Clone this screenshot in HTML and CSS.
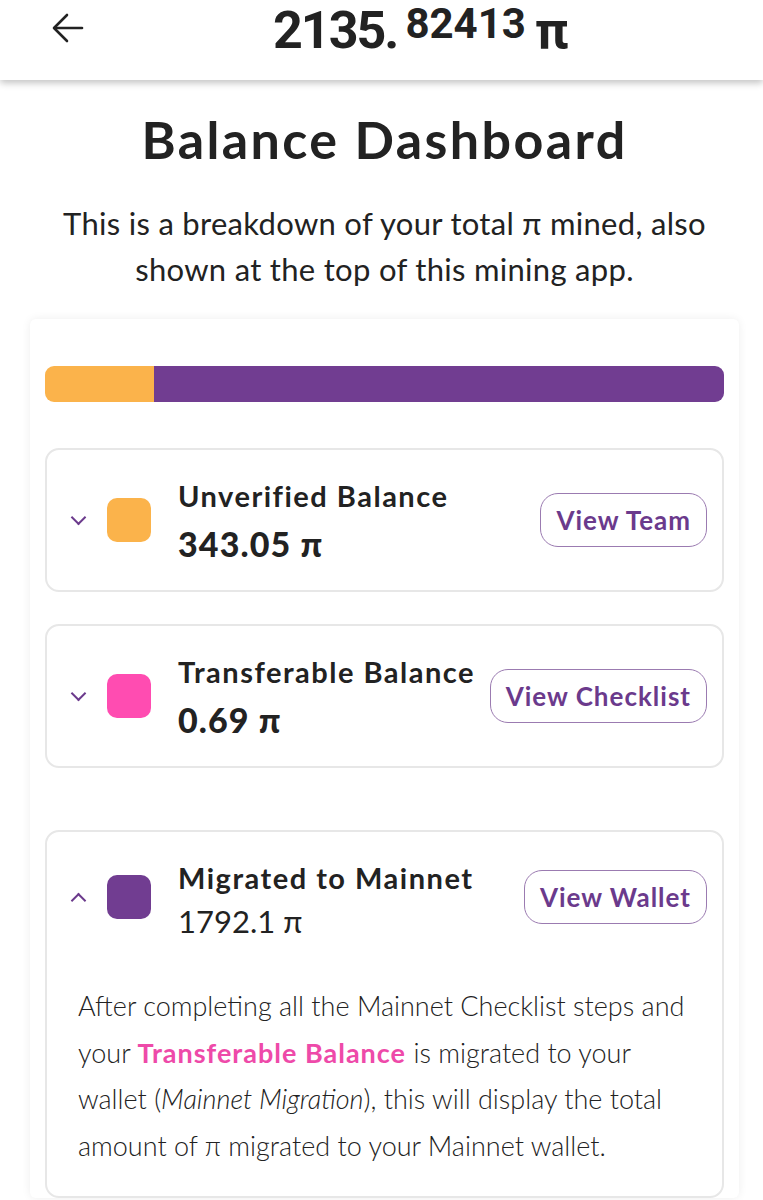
FILE: index.html
```html
<!DOCTYPE html>
<html lang="en">
<head>
  <meta charset="UTF-8">
  <meta name="viewport" content="width=device-width, initial-scale=1.0">
  <title>Balance Dashboard</title>
  <link rel="stylesheet" href="styles.css">
</head>
<body>
  <header class="topbar">
    <a class="back" href="#">
      <svg width="32" height="32" viewBox="0 0 32 32" fill="none" stroke="#222" stroke-width="2.6" stroke-linecap="round" stroke-linejoin="round">
        <path d="M30 16H3"/>
        <path d="M15 3L2 16l13 13"/>
      </svg>
    </a>
    <div class="total">
      <span class="int">2135.</span><span class="dec">82413</span><span class="pi">π</span>
    </div>
  </header>

  <main>
    <h1>Balance Dashboard</h1>
    <p class="intro">This is a breakdown of your total π mined, also shown at the top of this mining app.</p>

    <section class="card">
      <div class="bar">
        <div class="bar-part orange" style="width: 16%"></div>
        <div class="bar-part purple" style="width: 84%"></div>
      </div>

      <div class="item">
        <div class="item-row">
          <span class="chev down"></span>
          <span class="swatch orange"></span>
          <div class="item-text">
            <div class="item-title">Unverified Balance</div>
            <div class="item-amount">343.05 π</div>
          </div>
          <button class="btn">View Team</button>
        </div>
      </div>

      <div class="item">
        <div class="item-row">
          <span class="chev down"></span>
          <span class="swatch pink"></span>
          <div class="item-text">
            <div class="item-title">Transferable Balance</div>
            <div class="item-amount">0.69 π</div>
          </div>
          <button class="btn">View Checklist</button>
        </div>
      </div>

      <div class="item open">
        <div class="item-row">
          <span class="chev up"></span>
          <span class="swatch purple"></span>
          <div class="item-text">
            <div class="item-title">Migrated to Mainnet</div>
            <div class="item-amount light">1792.1 π</div>
          </div>
          <button class="btn">View Wallet</button>
        </div>
        <p class="item-desc">After completing all the Mainnet Checklist steps and your <b>Transferable Balance</b> is migrated to your wallet (<i>Mainnet Migration</i>), this will display the total amount of π migrated to your Mainnet wallet.</p>
      </div>
    </section>
  </main>
</body>
</html>
```

FILE: styles.css
```css
body {
  margin: 0;
  font-family: Lato, "Open Sans", sans-serif;
  color: #222;
  background: #fff;
}

.topbar {
  height: 80px;
  display: flex;
  align-items: flex-start;
  padding: 0 52px;
  background: #fff;
  box-shadow: 0 3px 7px rgba(0, 0, 0, 0.24);
  position: relative;
}
.back {
  display: flex;
  padding-top: 12px;
}
.total {
  margin-left: 189px;
  padding-top: 2px;
  font-family: Roboto, sans-serif;
  font-weight: 700;
  color: #222;
  line-height: 44px;
  white-space: nowrap;
}
.total .int {
  font-size: 52px;
  letter-spacing: -2px;
}
.total .dec {
  font-size: 42px;
  vertical-align: 10px;
  margin-left: 8px;
}
.total .pi {
  font-size: 52px;
  margin-left: 9px;
}

main {
  padding: 0 24px 0 30px;
}
h1 {
  margin: 29px 0 0;
  text-align: center;
  font-size: 52px;
  font-weight: 700;
  letter-spacing: 2.4px;
  line-height: 60px;
}
.intro {
  margin: 31px 0 0;
  text-align: center;
  font-size: 31px;
  font-weight: 400;
  letter-spacing: 0.3px;
  line-height: 46px;
}

.card {
  margin-top: 27px;
  background: #fff;
  border-radius: 6px;
  box-shadow: 0 0 10px rgba(0, 0, 0, 0.07);
  padding: 47px 15px 0;
}

.bar {
  display: flex;
  height: 36px;
  border-radius: 9px;
  overflow: hidden;
  margin-bottom: 46px;
}
.bar-part.orange { background: #fbb34b; }
.bar-part.purple { background: #713d91; }

.item {
  border: 2px solid #e7e7e7;
  border-radius: 14px;
  margin-bottom: 32px;
}
.item + .item.open {
  margin-top: 62px;
}
.item-row {
  display: flex;
  align-items: center;
  padding: 22px 15px 22px 26px;
}
.chev {
  width: 9px;
  height: 9px;
  border-right: 2px solid #6b3a8c;
  border-bottom: 2px solid #6b3a8c;
  margin-right: 23px;
}
.chev.down {
  transform: rotate(45deg);
  margin-top: -6px;
}
.chev.up {
  transform: rotate(-135deg);
  margin-top: 6px;
}
.swatch {
  width: 44px;
  height: 44px;
  border-radius: 10px;
  flex: none;
}
.swatch.orange { background: #fbb34b; }
.swatch.pink { background: #ff4cb1; }
.swatch.purple { background: #713d91; }

.item-text {
  flex: 1;
  margin-left: 27px;
}
.item-title {
  font-size: 29px;
  font-weight: 700;
  letter-spacing: 1.5px;
  line-height: 48px;
}
.item-amount {
  font-size: 34px;
  font-weight: 900;
  letter-spacing: 1.1px;
  line-height: 48px;
}
.item-amount.light {
  font-size: 31px;
  font-weight: 400;
  letter-spacing: 0;
  line-height: 38px;
}

.btn {
  font-family: Lato, sans-serif;
  font-size: 26px;
  font-weight: 700;
  letter-spacing: 1px;
  color: #6b3a8c;
  background: #fff;
  border: 1.5px solid #9b7bb1;
  border-radius: 18px;
  height: 54px;
  padding: 0 15px;
  cursor: pointer;
}

.item-desc {
  margin: 21px 30px 0 31px;
  padding-bottom: 27px;
  font-size: 27px;
  font-weight: 300;
  line-height: 46.5px;
}
.item-desc b {
  color: #ee4aa9;
  font-weight: 700;
  letter-spacing: 1px;
}
```
